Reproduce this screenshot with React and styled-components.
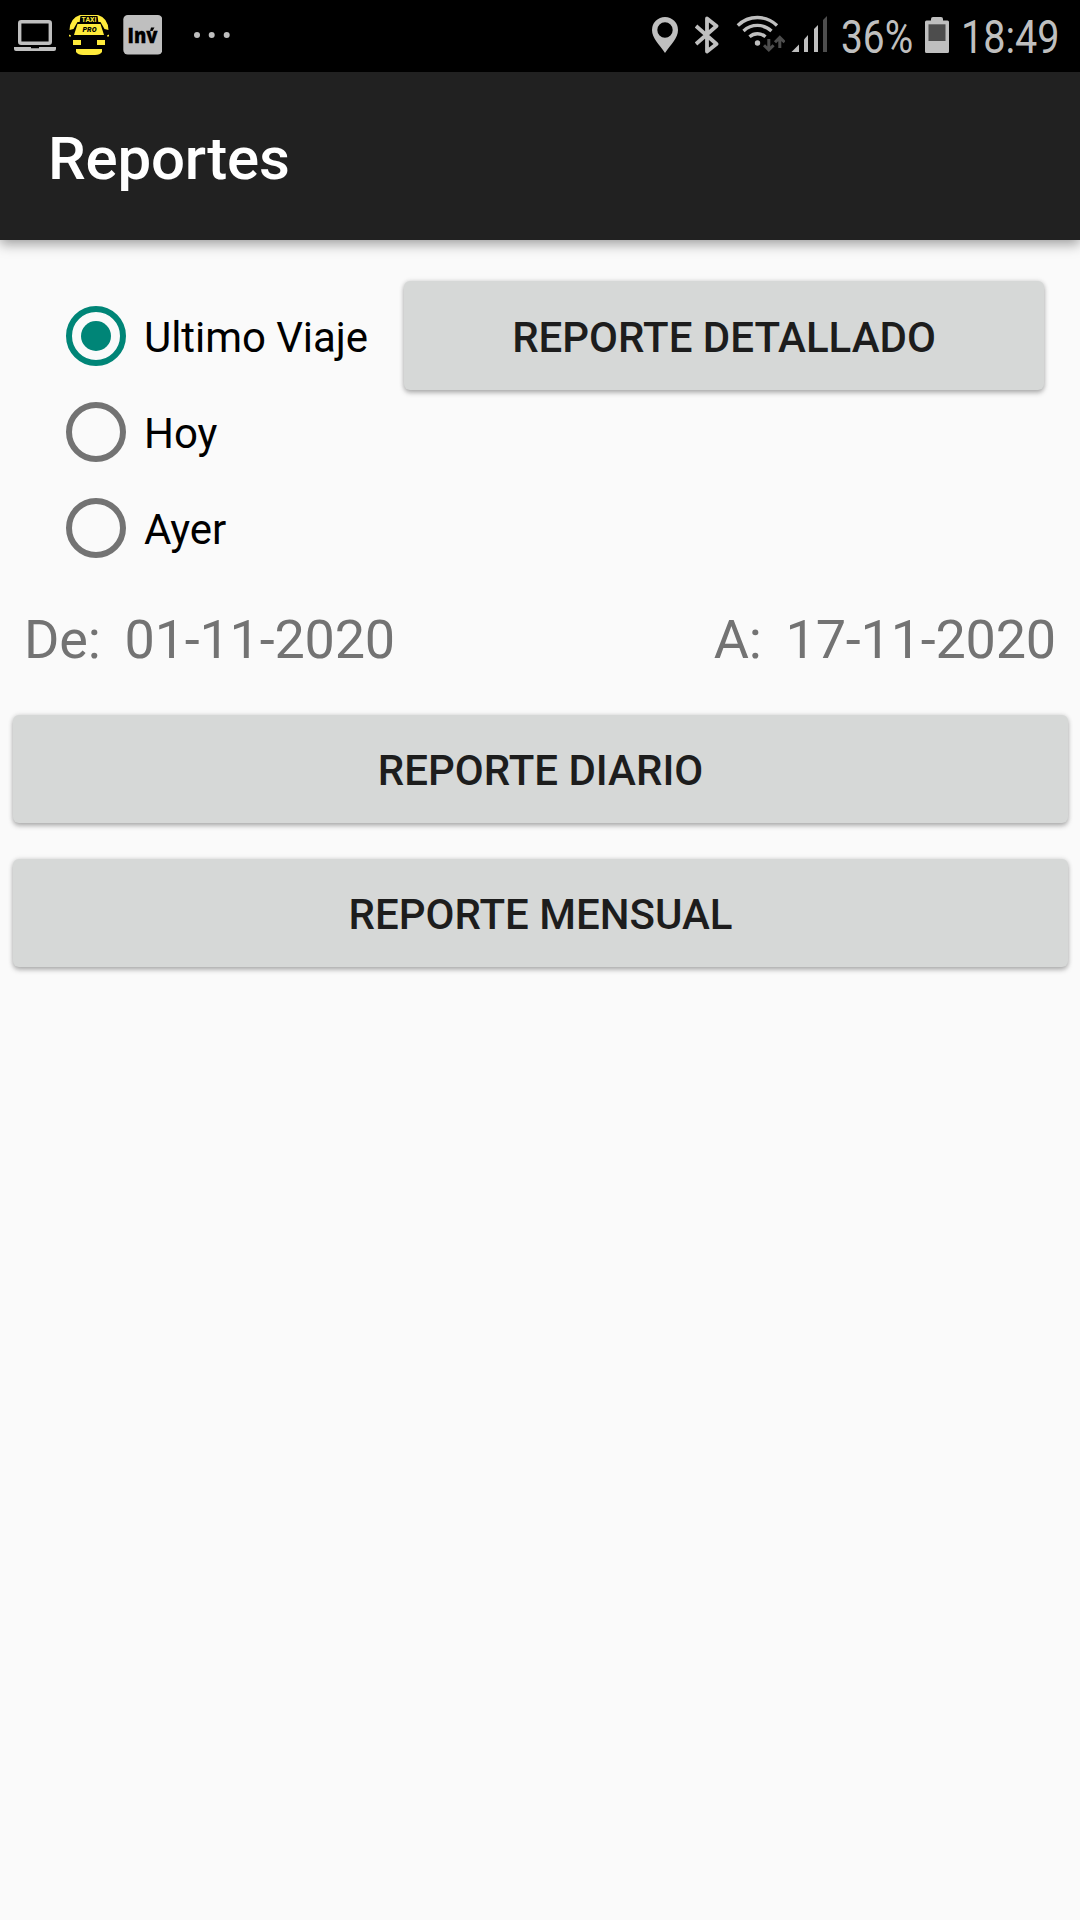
import { useState } from "react";
import styled, { createGlobalStyle, ThemeProvider } from "styled-components";

const theme = {
  color: {
    black: "#000000",
    toolbar: "#212121",
    background: "#fafafa",
    button: "#d6d8d7",
    buttonText: "#1d1d1d",
    accent: "#008577",
    control: "#737373",
    secondary: "#737373",
    status: "#bfbfbf",
    statusDim: "#4d4d4d",
    taxi: "#ffeb3b",
    white: "#ffffff",
  },
};

const GlobalStyle = createGlobalStyle`
  *, *::before, *::after {
    box-sizing: border-box;
  }

  body {
    margin: 0;
    background-color: ${({ theme }) => theme.color.background};
    font-family: Roboto, "Open Sans", sans-serif;
  }
`;

const Screen = styled.div`
  display: flex;
  flex-direction: column;
  width: 1080px;
  height: 1920px;
  overflow: hidden;
  background-color: ${({ theme }) => theme.color.background};
`;

const StatusBar = styled.div`
  display: flex;
  justify-content: space-between;
  height: 72px;
  padding: 0 20px 0 14px;
  background-color: ${({ theme }) => theme.color.black};
  color: ${({ theme }) => theme.color.status};
`;

const StatusGroup = styled.div`
  display: flex;
  align-items: center;
`;

const StatusIcon = styled.svg`
  display: block;
  flex: none;
  height: 72px;
  margin-right: ${({ $gap }) => $gap || 0}px;
`;

const StatusText = styled.div`
  width: ${({ $width }) => $width}px;
  height: 72px;
  margin-right: ${({ $gap }) => $gap || 0}px;
  font-size: 46px;
  line-height: 74px;
  white-space: nowrap;

  span {
    display: inline-block;
    transform: scaleX(${({ $stretch }) => $stretch});
    transform-origin: left center;
  }
`;

const Toolbar = styled.header`
  display: flex;
  align-items: center;
  height: 168px;
  padding: 5px 48px 0;
  background-color: ${({ theme }) => theme.color.toolbar};
  box-shadow: 0 4px 12px rgba(0, 0, 0, 0.38);
`;

const Title = styled.h1`
  margin: 0;
  font-size: 60px;
  font-weight: 500;
  line-height: 70px;
  letter-spacing: -0.2px;
  color: ${({ theme }) => theme.color.white};
`;

const FilterRow = styled.div`
  display: flex;
  align-items: flex-start;
  justify-content: space-between;
  height: 336px;
  padding: 41px 36px 0 66px;
`;

const RadioGroup = styled.div`
  display: flex;
  flex-direction: column;
  padding-top: 7px;
`;

const RadioLabel = styled.label`
  display: flex;
  align-items: center;
  gap: 18px;
  height: 96px;
  font-size: 42px;
  line-height: 50px;
  letter-spacing: -0.06px;
  color: ${({ theme }) => theme.color.black};
  cursor: pointer;

  span {
    padding-top: 3px;
  }
`;

const RadioInput = styled.input`
  display: grid;
  place-content: center;
  width: 60px;
  height: 60px;
  margin: 0;
  appearance: none;
  border: 6px solid ${({ theme }) => theme.color.control};
  border-radius: 50%;

  &:checked {
    border-color: ${({ theme }) => theme.color.accent};
  }

  &:checked::before {
    content: "";
    width: 30px;
    height: 30px;
    border-radius: 50%;
    background-color: ${({ theme }) => theme.color.accent};
  }
`;

const Button = styled.button`
  width: ${({ $width }) => $width || "100%"};
  height: ${({ $tall }) => ($tall ? 109 : 108)}px;
  padding: ${({ $tall }) => ($tall ? 4 : 3)}px 0 0;
  border: none;
  border-radius: 6px;
  background-color: ${({ theme }) => theme.color.button};
  color: ${({ theme }) => theme.color.buttonText};
  box-shadow: 0 3px 5px rgba(0, 0, 0, 0.26), 0 0 5px rgba(0, 0, 0, 0.14);
  font-family: inherit;
  font-size: 42px;
  font-weight: 500;
  line-height: 50px;
  text-transform: uppercase;
  cursor: pointer;
`;

const DateRow = styled.div`
  display: flex;
  justify-content: space-between;
  height: 139px;
  padding: 32px 24px 0;
  font-size: 54px;
  line-height: 64px;
  letter-spacing: -0.22px;
  color: ${({ theme }) => theme.color.secondary};
`;

const DateField = styled.div`
  display: flex;
  gap: 24px;
`;

const Actions = styled.div`
  display: flex;
  flex-direction: column;
  gap: 36px;
  padding: 0 12px 0 13px;
`;

const { status, statusDim, taxi } = theme.color;

const LaptopIcon = () => (
  <StatusIcon $gap={13} width="42" viewBox="14 0 42 72">
    <rect x="19.7" y="21.7" width="30.6" height="21.6" rx="1.5" fill="none" stroke={status} strokeWidth="3.4" />
    <path d="M14 47h17v1.2h8V47h17v2q0 2-2 2H16q-2 0-2-2z" fill={status} />
  </StatusIcon>
);

const TaxiIcon = () => (
  <StatusIcon $gap={14} width="40" viewBox="69 0 40 72">
    <g fill={taxi}>
      <path d="M80 15h18q10 3 10.5 15l-4-1-4-7h-23l-4 7-4 1Q70 18 80 15z" />
      <path d="M77.500 24h23l3.500 11H74z" />
      <rect x="73" y="40" width="8" height="5" />
      <rect x="97" y="40" width="8" height="5" />
      <path d="M76 49h26v3q-2 3-7 3H83q-5 0-7-3z" />
      <path d="M69 34.500l2 1v1h-2zM109 34.500l-2 1v1h2z" />
    </g>
    <path d="M80.500 16h17l1 7h-19z" fill="#000" />
    <text x="89" y="22.2" fill={taxi} fontSize="6.5" fontWeight="700" textAnchor="middle" textLength="15" lengthAdjust="spacingAndGlyphs">
      TAXI
    </text>
    <text x="89.5" y="31.8" fill="#000" fontSize="6.5" fontWeight="900" fontStyle="italic" textAnchor="middle" textLength="14" lengthAdjust="spacingAndGlyphs">
      PRO
    </text>
  </StatusIcon>
);

const InvIcon = () => (
  <StatusIcon $gap={32} width="39" viewBox="123 0 39 72">
    <rect x="123.3" y="15" width="39" height="39.5" rx="4.5" fill={status} />
    <text x="127.5" y="43" fill="#000" stroke="#000" strokeWidth="0.3" fontFamily="Open Sans, sans-serif" fontSize="21" fontWeight="800" textLength="30" lengthAdjust="spacingAndGlyphs">
      Inv
    </text>
    <path d="M151 27.500h3.500l-2 3.500h-2.500z" fill="#000" />
  </StatusIcon>
);

const MoreIcon = () => (
  <StatusIcon width="36" viewBox="194 0 36 72" fill={status}>
    <circle cx="197" cy="35" r="3" />
    <circle cx="211.7" cy="35" r="3" />
    <circle cx="226.7" cy="35" r="3" />
  </StatusIcon>
);

const PinIcon = () => (
  <StatusIcon $gap={17} width="26" viewBox="652 0 26 72">
    <path
      d="M665 17a13 13 0 0 0-13 13c0 8 7 14 13 23 6-9 13-15 13-23a13 13 0 0 0-13-13zm0 5.300a7.700 7.700 0 1 1 0 15.400 7.700 7.700 0 0 1 0-15.400z"
      fill={status}
      fillRule="evenodd"
    />
  </StatusIcon>
);

const BluetoothIcon = () => (
  <StatusIcon $gap={17} width="24" viewBox="695 0 24 72">
    <path
      d="M696 26l20.500 18-9.500 7.500V18.500l9.500 7.500L696 44"
      fill="none"
      stroke={status}
      strokeWidth="3.8"
      strokeLinejoin="round"
    />
  </StatusIcon>
);

const WifiIcon = () => (
  <StatusIcon $gap={6} width="49" viewBox="736 0 49 72">
    <g fill="none" stroke={status} strokeWidth="3.3">
      <path d="M737.800 25.500a28 28 0 0 1 39.200 0" />
      <path d="M743.500 31a20.500 20.500 0 0 1 28 0" />
      <path d="M749.500 36.800a12 12 0 0 1 16 0" />
    </g>
    <circle cx="757.5" cy="43" r="2.7" fill={status} />
    <g fill="none" stroke={statusDim} strokeWidth="3">
      <path d="M768.800 39v11M764 45.200l4.800 4.800 4.800-4.800" />
      <path d="M779.800 48V37.500M775 42.200l4.800-4.800 4.800 4.800" />
    </g>
  </StatusIcon>
);

const SignalIcon = () => (
  <StatusIcon $gap={13} width="37" viewBox="791 0 37 72" fill={status}>
    <path d="M791.500 52l7.500-7.500V52z" />
    <path d="M804 39.500l4-4.500v17h-4z" />
    <path d="M814 29l4-4v27h-4z" />
    <path d="M823 20l4-4v36h-4z" fill={statusDim} />
  </StatusIcon>
);

const BatteryIcon = () => (
  <StatusIcon $gap={12} width="24" viewBox="925 0 24 72">
    <path d="M931 20.500V19q0-2 2-2h8q2 0 2 2v1.500h4.500q1.500 0 1.500 1.500v29.500q0 1.500-1.500 1.500h-21q-1.500 0-1.500-1.500V22q0-1.500 1.500-1.500z" fill={status} />
    <rect x="928.5" y="24.3" width="17" height="16.7" fill={statusDim} />
  </StatusIcon>
);

const periods = [
  { id: "last", label: "Ultimo Viaje" },
  { id: "today", label: "Hoy" },
  { id: "yesterday", label: "Ayer" },
];

const App = () => {
  const [period, setPeriod] = useState("last");

  return (
    <ThemeProvider theme={theme}>
      <GlobalStyle />
      <Screen>
        <StatusBar>
          <StatusGroup>
            <LaptopIcon />
            <TaxiIcon />
            <InvIcon />
            <MoreIcon />
          </StatusGroup>
          <StatusGroup>
            <PinIcon />
            <BluetoothIcon />
            <WifiIcon />
            <SignalIcon />
            <StatusText $width={72} $gap={12} $stretch={0.845}>
              <span>36%</span>
            </StatusText>
            <BatteryIcon />
            <StatusText $width={99} $stretch={0.86}>
              <span>18:49</span>
            </StatusText>
          </StatusGroup>
        </StatusBar>
        <Toolbar>
          <Title>Reportes</Title>
        </Toolbar>
        <FilterRow>
          <RadioGroup>
            {periods.map(({ id, label }) => (
              <RadioLabel key={id}>
                <RadioInput
                  type="radio"
                  name="period"
                  checked={period === id}
                  onChange={() => setPeriod(id)}
                />
                <span>{label}</span>
              </RadioLabel>
            ))}
          </RadioGroup>
          <Button $width="640px" $tall>Reporte detallado</Button>
        </FilterRow>
        <DateRow>
          <DateField>
            <span>De:</span>
            <span>01-11-2020</span>
          </DateField>
          <DateField>
            <span>A:</span>
            <span>17-11-2020</span>
          </DateField>
        </DateRow>
        <Actions>
          <Button>Reporte diario</Button>
          <Button>Reporte mensual</Button>
        </Actions>
      </Screen>
    </ThemeProvider>
  );
};

export default App;
